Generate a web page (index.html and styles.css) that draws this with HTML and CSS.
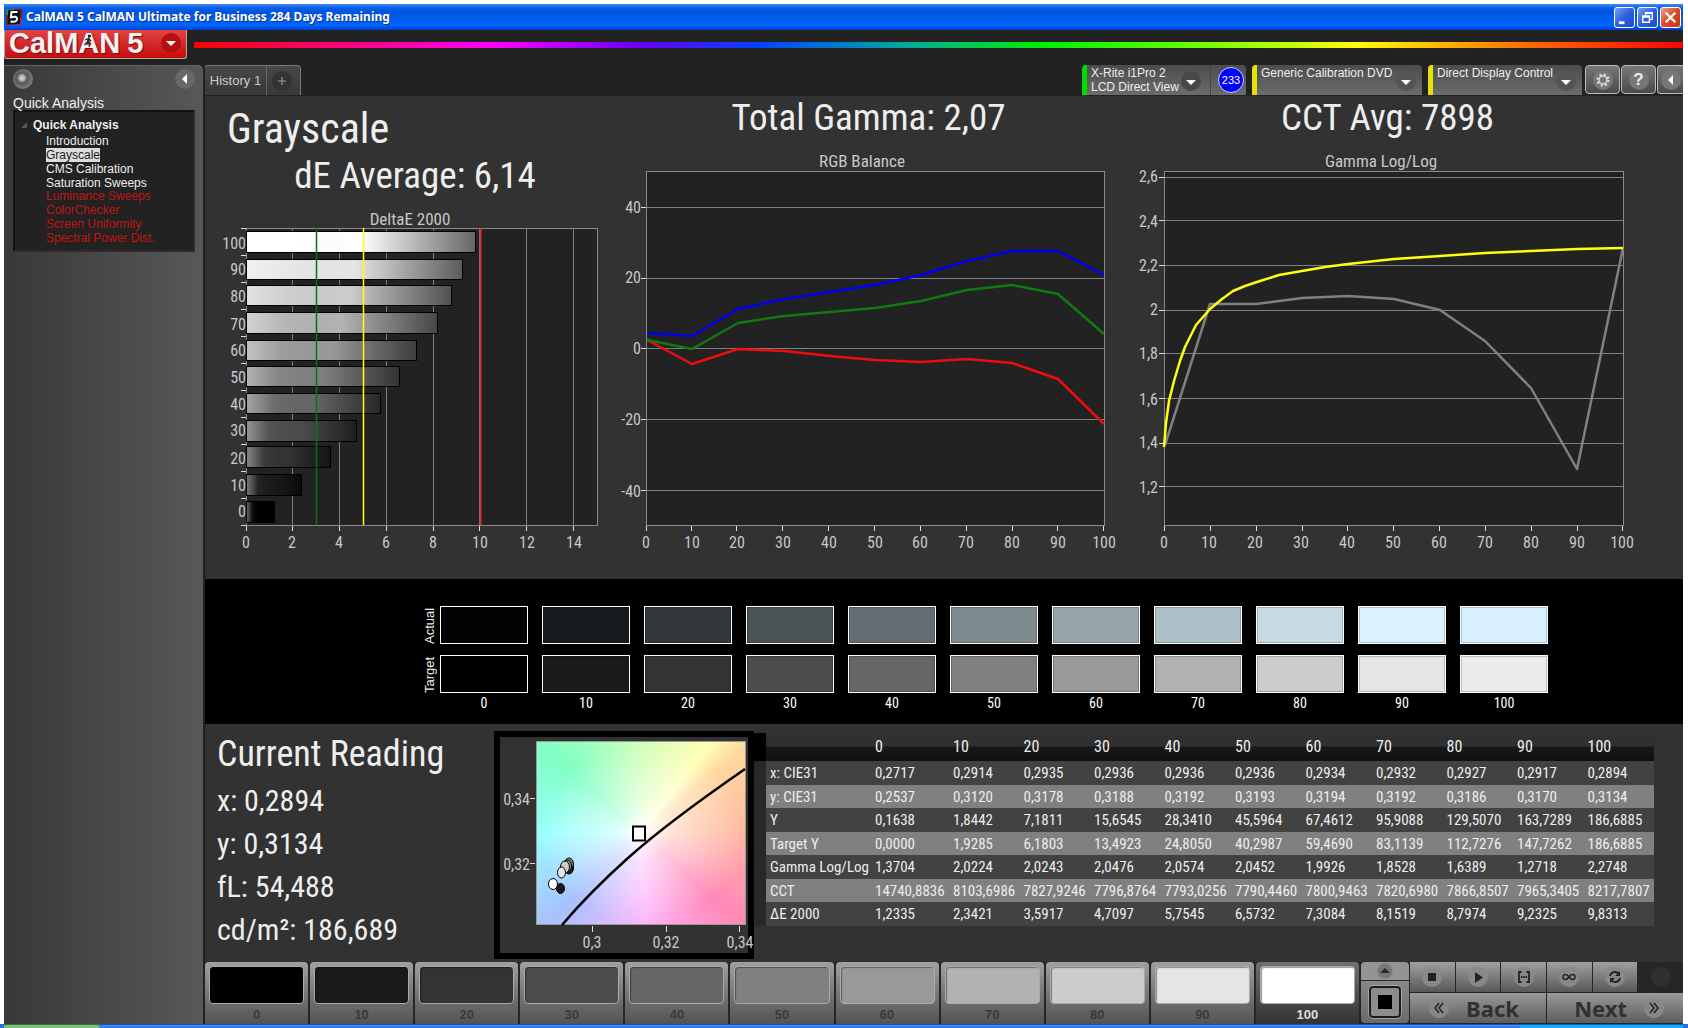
FILE: index.html
```html
<!DOCTYPE html>
<html lang="en">
<head>
<meta charset="utf-8">
<title>CalMAN 5</title>
<link rel="stylesheet" href="styles.css">
</head>
<body>
<div class="window">
  <header class="titlebar">
    <svg class="app-icon" viewBox="0 0 16 16" aria-hidden="true"><rect width="16" height="16" fill="#7a1f10"/><rect width="8" height="6" fill="#2c8a3a"/><rect x="9" y="9" width="7" height="7" fill="#a03060"/><rect x="2" y="1" width="12" height="14" fill="#111"/><path d="M11.500 3H5.500L5 8.200Q11 6.500 11 10T4.500 12.500" fill="none" stroke="#fff" stroke-width="2"/></svg>
    <span class="titlebar-text">CalMAN 5 CalMAN Ultimate for Business 284 Days Remaining</span>
    <div class="window-buttons">
      <button aria-label="Minimize"><svg viewBox="0 0 20 20"><path d="M4 14h6v3H4z" fill="#fff"/></svg></button>
      <button aria-label="Restore"><svg viewBox="0 0 20 20"><path d="M8 8V5h7v7h-3M5 8.500h7V15H5zM8 5.500h7M5 9.500h7" fill="none" stroke="#fff" stroke-width="1.500"/></svg></button>
      <button class="close" aria-label="Close"><svg viewBox="0 0 20 20"><path d="M5 5l10 10M15 5L5 15" stroke="#fff" stroke-width="2.500"/></svg></button>
    </div>
  </header>

  <div class="brandbar">
    <button class="logo">
      <span>CalM<span class="logo-a">A<svg viewBox="0 0 10 14" aria-hidden="true"><circle cx="6.500" cy="2" r="1.600" fill="#222"/><path d="M6 4L4.500 8 7 10 6 13M4.500 8L1.500 11M2 6l3.500-1.500L8 7" fill="none" stroke="#222" stroke-width="1.300"/></svg></span>N<b>5</b></span>
      <span class="logo-arrow"><svg viewBox="0 0 20 20"><path d="M5 8h10l-5 5z" fill="#fff"/></svg></span>
    </button>
    <div class="spectrum"></div>
  </div>

  <div class="body">
    <aside class="sidebar">
      <div class="sidebar-top">
        <button class="round dot" aria-label="Record"></button>
        <button class="round" aria-label="Collapse sidebar"><svg viewBox="0 0 20 20"><path d="M12 5v10L7 10z" fill="#fff"/></svg></button>
      </div>
      <h2 class="sidebar-title">Quick Analysis</h2>
      <nav class="tree">
        <div class="tree-head"><svg viewBox="0 0 6 6"><path d="M6 0v6H0z" fill="#555"/></svg>Quick Analysis</div>
        <ul>
          <li><a href="#">Introduction</a></li>
          <li><a href="#" class="selected">Grayscale</a></li>
          <li><a href="#">CMS Calibration</a></li>
          <li><a href="#">Saturation Sweeps</a></li>
        </ul>
        <ul class="locked">
          <li><a href="#">Luminance Sweeps</a></li>
          <li><a href="#">ColorChecker</a></li>
          <li><a href="#">Screen Uniformity</a></li>
          <li><a href="#">Spectral Power Dist.</a></li>
        </ul>
      </nav>
    </aside>

    <div class="workspace">
      <div class="tabrow">
        <div class="tabs">
          <button class="tab">History 1</button>
          <button class="tab add" aria-label="Add history"><svg viewBox="0 0 20 20"><circle cx="10" cy="10" r="10" fill="#333"/><path d="M10 6v8M6 10h8" stroke="#999" stroke-width="1.200"/></svg></button>
        </div>
        <div class="devices">
          <div class="device meter">
            <button class="device-pick"><span>X-Rite i1Pro 2<br>LCD Direct View</span><svg class="drop" viewBox="0 0 20 20"><circle cx="10" cy="10" r="10" fill="#484848"/><path d="M5 9h10l-5 5z" fill="#fff"/></svg></button>
            <span class="count">233</span>
          </div>
          <div class="device source">
            <button class="device-pick"><span>Generic Calibration DVD</span><svg class="drop" viewBox="0 0 20 20"><circle cx="10" cy="10" r="10" fill="#555"/><path d="M5 9h10l-5 5z" fill="#fff"/></svg></button>
          </div>
          <div class="device display">
            <button class="device-pick"><span>Direct Display Control</span><svg class="drop" viewBox="0 0 20 20"><circle cx="10" cy="10" r="10" fill="#555"/><path d="M5 9h10l-5 5z" fill="#fff"/></svg></button>
          </div>
          <button class="tool" aria-label="Settings"><svg viewBox="0 0 20 20"><circle cx="10" cy="10" r="10" fill="#777"/><circle cx="10" cy="10" r="4" fill="none" stroke="#ddd" stroke-width="1.500"/><circle cx="10" cy="10" r="5.600" fill="none" stroke="#ddd" stroke-width="2" stroke-dasharray="2.200 2.200"/></svg></button>
          <button class="tool help" aria-label="Help"><span>?</span></button>
          <button class="tool cut" aria-label="Collapse"><svg viewBox="0 0 20 20"><circle cx="10" cy="10" r="10" fill="#777"/><path d="M12 5v10L7 10z" fill="#fff"/></svg></button>
        </div>
      </div>

      <main class="page">
        <section class="charts">
          <div class="chart">
            <h1>Grayscale</h1>
            <p class="metric average">dE Average: 6,14</p>
            <svg class="plot" viewBox="205 198 400 381" role="img" aria-label="DeltaE 2000">
              <defs>
                <linearGradient id="shade"><stop offset="0" stop-color="#fff" stop-opacity=".4"/><stop offset=".2" stop-color="#fff" stop-opacity=".05"/><stop offset=".5" stop-color="#000" stop-opacity="0"/><stop offset="1" stop-color="#000" stop-opacity=".6"/></linearGradient>
              </defs>
              <text class="caption" x="410" y="225" text-anchor="middle">DeltaE 2000</text>
              <rect class="area" x="246.500" y="228.500" width="351" height="297"/>
              <path class="grid" d="M292.500 228v297M339.500 228v297M386.500 228v297M433.500 228v297M479.500 228v297M526.500 228v297M573.500 228v297"/>
              <g stroke="#000">
                <rect fill="#fff" x="246.500" y="231.500" width="229" height="21"/>
                <rect fill="#e5e5e5" x="246.500" y="259.500" width="216" height="20"/>
                <rect fill="#ccc" x="246.500" y="285.500" width="205" height="20"/>
                <rect fill="#b2b2b2" x="246.500" y="312.500" width="191" height="21"/>
                <rect fill="#999" x="246.500" y="340.500" width="170" height="20"/>
                <rect fill="#808080" x="246.500" y="366.500" width="153" height="20"/>
                <rect fill="#666" x="246.500" y="393.500" width="134" height="20"/>
                <rect fill="#4c4c4c" x="246.500" y="420.500" width="110" height="21"/>
                <rect fill="#333" x="246.500" y="446.500" width="84" height="21"/>
                <rect fill="#1a1a1a" x="246.500" y="474.500" width="55" height="21"/>
                <rect fill="#000" x="246.500" y="501.500" width="28" height="21"/>
              </g>
              <g fill="url(#shade)">
                <rect x="247" y="232" width="228" height="20"/><rect x="247" y="260" width="215" height="19"/><rect x="247" y="286" width="204" height="19"/><rect x="247" y="313" width="190" height="20"/><rect x="247" y="341" width="169" height="19"/><rect x="247" y="367" width="152" height="19"/><rect x="247" y="394" width="133" height="19"/><rect x="247" y="421" width="109" height="20"/><rect x="247" y="447" width="83" height="20"/><rect x="247" y="475" width="54" height="20"/><rect x="247" y="502" width="27" height="20"/>
              </g>
              <path stroke="#107010" stroke-width="1.500" d="M316.500 228v297"/><path stroke="#ffff10" stroke-width="1.500" d="M363.500 228v297"/><path stroke="#d83030" stroke-width="2" d="M480.500 228v297"/>
              <path class="tick" d="M241 228.500h5M241 255.500h5M241 282.500h5M241 309.500h5M241 336.500h5M241 363.500h5M241 390.500h5M241 417.500h5M241 444.500h5M241 471.500h5M241 498.500h5M241 525.500h5M246.500 526v5M292.500 526v5M339.500 526v5M386.500 526v5M433.500 526v5M479.500 526v5M526.500 526v5M573.500 526v5"/>
              <g text-anchor="end"><text x="246" y="249">100</text><text x="246" y="275">90</text><text x="246" y="302">80</text><text x="246" y="330">70</text><text x="246" y="356">60</text><text x="246" y="383">50</text><text x="246" y="410">40</text><text x="246" y="436">30</text><text x="246" y="464">20</text><text x="246" y="491">10</text><text x="246" y="517">0</text></g>
              <g text-anchor="middle"><text x="246" y="548">0</text><text x="292" y="548">2</text><text x="339" y="548">4</text><text x="386" y="548">6</text><text x="433" y="548">8</text><text x="480" y="548">10</text><text x="527" y="548">12</text><text x="574" y="548">14</text></g>
            </svg>
          </div>

          <div class="chart">
            <p class="metric gamma">Total Gamma: 2,07</p>
            <svg class="plot" viewBox="605 140 515 439" role="img" aria-label="RGB Balance">
              <text class="caption" x="862" y="167" text-anchor="middle">RGB Balance</text>
              <rect class="area" x="646.500" y="171.500" width="458" height="354"/>
              <path class="grid" d="M647 207.500h457M647 278.500h457M647 348.500h457M647 419.500h457M647 490.500h457"/>
              <g class="curve">
                <polyline stroke="#f00c0c" points="647,340 692,364 738,349 784,351 830,356 875,360 921,362 967,359 1012,363 1058,379 1104,424"/>
                <polyline stroke="#107a10" points="647,340 692,349 738,323 784,316 830,312 875,308 921,301 967,290 1012,285 1058,294 1104,334"/>
                <polyline stroke="#0000f0" points="647,333 692,336 738,309 784,299 830,292 875,285 921,275 967,261 1012,251 1058,251 1104,275"/>
              </g>
              <path class="tick" d="M641 207.500h5M641 278.500h5M641 348.500h5M641 419.500h5M641 490.500h5M646.500 526v5M691.500 526v5M736.500 526v5M782.500 526v5M828.500 526v5M874.500 526v5M920.500 526v5M966.500 526v5M1012.500 526v5M1057.500 526v5M1103.500 526v5"/>
              <g text-anchor="end"><text x="641" y="213">40</text><text x="641" y="283">20</text><text x="641" y="354">0</text><text x="641" y="425">-20</text><text x="641" y="497">-40</text></g>
              <g text-anchor="middle"><text x="646" y="548">0</text><text x="692" y="548">10</text><text x="737" y="548">20</text><text x="783" y="548">30</text><text x="829" y="548">40</text><text x="875" y="548">50</text><text x="920" y="548">60</text><text x="966" y="548">70</text><text x="1012" y="548">80</text><text x="1058" y="548">90</text><text x="1104" y="548">100</text></g>
            </svg>
          </div>

          <div class="chart">
            <p class="metric cct">CCT Avg: 7898</p>
            <svg class="plot" viewBox="1120 140 563 439" role="img" aria-label="Gamma Log/Log">
              <text class="caption" x="1381" y="167" text-anchor="middle">Gamma Log/Log</text>
              <rect class="area" x="1164.500" y="171.500" width="459" height="354"/>
              <path class="grid" d="M1165 177.500h458M1165 220.500h458M1165 265.500h458M1165 310.500h458M1165 353.500h458M1165 398.500h458M1165 443.500h458M1165 486.500h458"/>
              <g class="curve">
                <polyline stroke="#808080" points="1165,445 1210,304 1256,304 1302,298 1348,296 1394,299 1440,310 1485,341 1531,388 1577,469 1623,248"/>
                <polyline stroke="#ffff10" points="1164,447 1166,423 1169,401 1174,381 1180,361 1185,347 1196,325 1210,309 1222,299 1233,291 1245,286 1260,281 1279,275 1302,271 1325,267 1348,264 1394,259 1440,256 1485,253 1531,251 1577,249 1623,248"/>
              </g>
              <path class="tick" d="M1159 177.500h5M1159 220.500h5M1159 265.500h5M1159 310.500h5M1159 353.500h5M1159 398.500h5M1159 443.500h5M1159 486.500h5M1164.500 526v5M1210.500 526v5M1256.500 526v5M1302.500 526v5M1347.500 526v5M1393.500 526v5M1439.500 526v5M1485.500 526v5M1531.500 526v5M1577.500 526v5M1622.500 526v5"/>
              <g text-anchor="end"><text x="1158" y="182">2,6</text><text x="1158" y="227">2,4</text><text x="1158" y="271">2,2</text><text x="1158" y="315">2</text><text x="1158" y="359">1,8</text><text x="1158" y="405">1,6</text><text x="1158" y="448">1,4</text><text x="1158" y="493">1,2</text></g>
              <g text-anchor="middle"><text x="1164" y="548">0</text><text x="1209" y="548">10</text><text x="1255" y="548">20</text><text x="1301" y="548">30</text><text x="1347" y="548">40</text><text x="1393" y="548">50</text><text x="1439" y="548">60</text><text x="1485" y="548">70</text><text x="1531" y="548">80</text><text x="1577" y="548">90</text><text x="1622" y="548">100</text></g>
            </svg>
          </div>
        </section>

        <section class="swatches">
          <div class="swatch-names"><span>Actual</span><span>Target</span></div>
          <div class="swatch-grid">
            <i style="background:#030305"></i><i style="background:#171b1d"></i><i style="background:#323739"></i><i style="background:#4b5356"></i><i style="background:#656c72"></i><i style="background:#7d8a8e"></i><i style="background:#96a3aa"></i><i style="background:#aec0c7"></i><i style="background:#c7dae3"></i><i style="background:#dcf2ff"></i><i style="background:#d8efff"></i>
            <i style="background:#000"></i><i style="background:#1a1a1a"></i><i style="background:#333"></i><i style="background:#4c4c4c"></i><i style="background:#666"></i><i style="background:#808080"></i><i style="background:#999"></i><i style="background:#b2b2b2"></i><i style="background:#ccc"></i><i style="background:#e5e5e5"></i><i style="background:#ebebeb"></i>
            <span>0</span><span>10</span><span>20</span><span>30</span><span>40</span><span>50</span><span>60</span><span>70</span><span>80</span><span>90</span><span>100</span>
          </div>
        </section>

        <section class="readout">
          <div class="reading">
            <h2>Current Reading</h2>
            <p>x: 0,2894</p>
            <p>y: 0,3134</p>
            <p>fL: 54,488</p>
            <p>cd/m²: 186,689</p>
          </div>
          <div class="cie">
            <div class="cie-field"></div>
            <svg viewBox="495 731 260 228" role="img" aria-label="CIE chart">
              <path d="M563 925Q590 893 629 858T746 769" fill="none" stroke="#000" stroke-width="2.500"/>
              <rect x="634" y="826.500" width="12" height="14" fill="#fff" stroke="#000" stroke-width="2"/>
              <g stroke="#000"><ellipse cx="570" cy="868" rx="4.500" ry="6" fill="#222"/><ellipse cx="570" cy="864" rx="4.500" ry="6" fill="#777"/><ellipse cx="568" cy="866" rx="4.500" ry="6" fill="#999"/><ellipse cx="566" cy="867" rx="4.500" ry="6" fill="#ccc"/><ellipse cx="562.500" cy="872.500" rx="4" ry="5.500" fill="#e5e5e5"/><ellipse cx="561.500" cy="888.500" rx="4" ry="5" fill="#1a1a1a"/><ellipse cx="554" cy="884" rx="4.500" ry="5.500" fill="#fff"/></g>
              <path class="tick" d="M531 798.500h5M531 863.500h5M593.500 926v6M667.500 926v6M740.500 926v6"/>
              <g text-anchor="end"><text x="531" y="805">0,34</text><text x="531" y="870">0,32</text></g>
              <g text-anchor="middle"><text x="593" y="948">0,3</text><text x="667" y="948">0,32</text><text x="741" y="948">0,34</text></g>
            </svg>
          </div>
          <table>
            <colgroup><col class="c-mark"><col class="c-name"><col class="c-first"><col span="10"></colgroup>
            <thead><tr><th></th><th></th><th>0</th><th>10</th><th>20</th><th>30</th><th>40</th><th>50</th><th>60</th><th>70</th><th>80</th><th>90</th><th>100</th></tr></thead>
            <tbody>
            <tr><td></td><th>x: CIE31</th><td>0,2717</td><td>0,2914</td><td>0,2935</td><td>0,2936</td><td>0,2936</td><td>0,2936</td><td>0,2934</td><td>0,2932</td><td>0,2927</td><td>0,2917</td><td>0,2894</td></tr>
            <tr><td></td><th>y: CIE31</th><td>0,2537</td><td>0,3120</td><td>0,3178</td><td>0,3188</td><td>0,3192</td><td>0,3193</td><td>0,3194</td><td>0,3192</td><td>0,3186</td><td>0,3170</td><td>0,3134</td></tr>
            <tr><td></td><th>Y</th><td>0,1638</td><td>1,8442</td><td>7,1811</td><td>15,6545</td><td>28,3410</td><td>45,5964</td><td>67,4612</td><td>95,9088</td><td>129,5070</td><td>163,7289</td><td>186,6885</td></tr>
            <tr><td></td><th>Target Y</th><td>0,0000</td><td>1,9285</td><td>6,1803</td><td>13,4923</td><td>24,8050</td><td>40,2987</td><td>59,4690</td><td>83,1139</td><td>112,7276</td><td>147,7262</td><td>186,6885</td></tr>
            <tr><td></td><th>Gamma Log/Log</th><td>1,3704</td><td>2,0224</td><td>2,0243</td><td>2,0476</td><td>2,0574</td><td>2,0452</td><td>1,9926</td><td>1,8528</td><td>1,6389</td><td>1,2718</td><td>2,2748</td></tr>
            <tr><td></td><th>CCT</th><td>14740,8836</td><td>8103,6986</td><td>7827,9246</td><td>7796,8764</td><td>7793,0256</td><td>7790,4460</td><td>7800,9463</td><td>7820,6980</td><td>7866,8507</td><td>7965,3405</td><td>8217,7807</td></tr>
            <tr><td></td><th>ΔE 2000</th><td>1,2335</td><td>2,3421</td><td>3,5917</td><td>4,7097</td><td>5,7545</td><td>6,5732</td><td>7,3084</td><td>8,1519</td><td>8,7974</td><td>9,2325</td><td>9,8313</td></tr>
            </tbody>
          </table>
        </section>

        <footer class="controls">
          <div class="levels">
            <button><i style="background:#000"></i>0</button>
            <button><i style="background:#1a1a1a"></i>10</button>
            <button><i style="background:#333"></i>20</button>
            <button><i style="background:#4c4c4c"></i>30</button>
            <button><i style="background:#666"></i>40</button>
            <button><i style="background:#808080"></i>50</button>
            <button><i style="background:#999"></i>60</button>
            <button><i style="background:#b2b2b2"></i>70</button>
            <button><i style="background:#ccc"></i>80</button>
            <button><i style="background:#e5e5e5"></i>90</button>
            <button class="active"><i style="background:#fff"></i>100</button>
          </div>
          <div class="window-size">
            <button class="up" aria-label="Expand"><svg viewBox="0 0 16 16"><circle cx="8" cy="8" r="7.500" fill="#777"/><path d="M3 10h10L8 5z" fill="#2a2a2a"/></svg></button>
            <button class="pattern" aria-label="Pattern window"><svg viewBox="0 0 34 34"><rect x="2" y="2" width="30" height="30" rx="3" fill="none" stroke="#ccc" stroke-width="3"/><rect x="2" y="2" width="30" height="30" rx="3" fill="#8c8c8c" stroke="#1c1c1c" stroke-width="2"/><rect x="10" y="10" width="14" height="14" fill="#000"/></svg></button>
          </div>
          <div class="transport">
            <button aria-label="Stop"><svg viewBox="0 0 20 20"><circle cx="10" cy="10" r="10"/><path d="M6 6h8v8H6z" fill="#222"/></svg></button>
            <button aria-label="Play"><svg viewBox="0 0 20 20"><circle cx="10" cy="10" r="10"/><path d="M7 5l8 5.500L7 16z" fill="#222"/></svg></button>
            <button aria-label="Read series"><svg viewBox="0 0 20 20"><circle cx="10" cy="10" r="10"/><path d="M7.500 5H5v10h2.500M12.500 5H15v10h-2.500M7 10h1.500M9.300 10h1.500M11.600 10h1.500" fill="none" stroke="#222" stroke-width="1.800"/></svg></button>
            <button aria-label="Read continuously"><svg viewBox="0 0 20 20"><circle cx="10" cy="10" r="10"/><path d="M10 10C8 7 4 6.500 4 10S8 13 10 10 16 6.500 16 10 12 13 10 10z" fill="none" stroke="#222" stroke-width="1.500"/></svg></button>
            <button aria-label="Refresh"><svg viewBox="0 0 20 20"><circle cx="10" cy="10" r="10"/><path d="M5 9q1-4 5-4 2.500 0 4 2M15 11q-1 4-5 4-2.500 0-4-2" fill="none" stroke="#222" stroke-width="2"/><path d="M15 4v5h-5zM5 16v-5h5z" fill="#222"/></svg></button>
            <button class="off" aria-label="Idle"><svg viewBox="0 0 20 20"><circle cx="10" cy="10" r="10"/></svg></button>
            <button class="wide back"><svg viewBox="0 0 20 20"><circle cx="10" cy="10" r="10"/><path d="M10 5l-4 5 4 5M14 5l-4 5 4 5" fill="none" stroke="#222" stroke-width="1.500"/></svg>Back</button>
            <button class="wide next">Next<svg viewBox="0 0 20 20"><circle cx="10" cy="10" r="10"/><path d="M6 5l4 5-4 5M10 5l4 5-4 5" fill="none" stroke="#222" stroke-width="1.500"/></svg></button>
          </div>
        </footer>
      </main>
    </div>
  </div>
</div>
<div class="taskbar"><div class="start"></div><div class="tasks"></div><div class="tray"></div></div>
</body>
</html>
```
FILE: styles.css
```css
* { box-sizing: border-box; }
body {
  margin: 0;
  min-height: 100vh;
  display: flex;
  flex-direction: column;
  background: #fff;
  color: #eee;
  font: 12px/14px "Liberation Sans", Arial, sans-serif;
}
button { margin: 0; padding: 0; border: 0; background: none; color: inherit; font: inherit; }
h1, h2, p, ul { margin: 0; padding: 0; font-weight: normal; list-style: none; }
a { color: inherit; text-decoration: none; }
svg { display: block; }

.window {
  flex: 1;
  display: flex;
  flex-direction: column;
  margin: 4px 5px 0 4px;
  background: #222;
}

/* Title bar */
.titlebar {
  display: flex;
  align-items: center;
  height: 26px;
  padding: 0 2px;
  background: linear-gradient(#3f8cf3, #0a5de8 4px, #0054e0 8px, #0066ff 21px, #003fd0);
}
.app-icon { width: 16px; height: 16px; }
.titlebar-text {
  flex: 1;
  padding-left: 4px;
  color: #fff;
  font: bold 12px/20px "Noto Sans", "Open Sans", sans-serif;
  text-shadow: 1px 1px #10307c;
}
.window-buttons { display: flex; gap: 2px; }
.window-buttons button {
  width: 21px;
  height: 21px;
  border: 1px solid #fff;
  border-radius: 3px;
  background: linear-gradient(135deg, #7ba1f5, #2a5fe0 50%, #1d4fd0);
}
.window-buttons .close { background: linear-gradient(135deg, #f0a088, #dc4a24 50%, #c03a14); }

/* Logo and spectrum */
.brandbar { display: flex; height: 35px; gap: 7px; }
.logo {
  display: flex;
  justify-content: space-between;
  width: 183px;
  height: 29px;
  padding: 0 5px 0 4px;
  border: solid #aaa;
  border-width: 0 1px 1px;
  border-radius: 0 0 3px 3px;
  background: linear-gradient(#e04444, #c80c0c);
  color: #f2f2f2;
  font: bold 29px/26px "Liberation Sans", Arial, sans-serif;
  text-shadow: 1px 1px 1px #701010;
}
.logo b { padding-left: 7px; }
.logo-a { position: relative; }
.logo-a svg { position: absolute; left: 5px; top: 7px; width: 10px; height: 14px; }
.logo-arrow { width: 20px; height: 20px; margin: 3px 0; border-radius: 50%; background: #b81010; }
.spectrum {
  flex: 1;
  height: 6px;
  margin-top: 12px;
  background: linear-gradient(90deg, #f00, #f0a 14%, #f0f 20%, #60f 30%, #04f 38%, #0a9 48%, #0e0 57%, #6f0 67%, #ff0 78%, #f60 90%, #f00);
}

.body { flex: 1; display: flex; gap: 2px; }

/* Sidebar */
.sidebar {
  width: 199px;
  padding: 3px 8px 0 9px;
  border-top: 1px solid #666;
  border-radius: 0 5px 0 0;
  background: linear-gradient(90deg, #383838, #585858);
}
.sidebar-top { display: flex; justify-content: space-between; }
.round { width: 20px; height: 20px; border-radius: 50%; background: #686868; }
.dot { background: radial-gradient(circle at 9px 9px, #ddd, #aaa 3px, #555 5px, #777 10px); }
.sidebar-title { padding-top: 5px; font-size: 14px; line-height: 18px; }
.tree {
  height: 142px;
  margin-top: -2px;
  padding: 6px 6px;
  border: 2px solid #151515;
  border-color: #111 #2c2c2c #2c2c2c #111;
  background: #222;
  line-height: 14px;
}
.tree-head { display: flex; align-items: center; gap: 6px; padding-bottom: 2px; font-weight: bold; }
.tree-head svg { width: 6px; height: 6px; }
.tree li { padding-left: 25px; }
.selected { display: inline-block; background: #ddd; color: #222; }
.locked { margin-top: -1px; color: #c01414; }

/* Tab row */
.workspace { flex: 1; min-width: 0; display: flex; flex-direction: column; }
.tabrow { display: flex; justify-content: space-between; height: 31px; overflow: hidden; }
.tabs { display: flex; height: 30px; margin-left: -1px; border: 1px solid #777; border-bottom: 0; border-radius: 4px 4px 0 0; background: linear-gradient(#484848, #383838); }
.tab { width: 61px; color: #ccc; font-size: 13px; }
.tab.add { width: 34px; padding-left: 5px; border-left: 1px solid #666; }
.add svg { width: 20px; height: 20px; }
.devices { display: flex; align-items: flex-start; }
.device {
  display: flex;
  height: 30px;
  margin-right: 6px;
  border-left: 5px solid #0d0;
  border-radius: 4px 4px 0 0;
  background: linear-gradient(#4c4c4c, #6c6c6c);
}
.meter { width: 164px; }
.source { width: 170px; border-color: #e4e400; }
.display { width: 154px; margin-right: 3px; border-color: #e4e400; }
.device-pick { flex: 1; display: flex; justify-content: space-between; padding: 1px 6px 0 4px; text-align: left; white-space: nowrap; }
.drop { width: 20px; height: 20px; margin-top: 5px; }
.source .drop, .display .drop { margin-left: -6px; }
.meter .device-pick { padding-right: 9px; border-right: 1px solid #444; }
.count {
  width: 26px;
  height: 26px;
  margin: 2px 2px 0 7px;
  border: 1px solid #ccf;
  border-radius: 50%;
  background: #00f;
  color: #fff;
  font-size: 11px;
  line-height: 24px;
  text-align: center;
}
.tool {
  display: flex;
  align-items: center;
  justify-content: center;
  width: 35px;
  height: 29px;
  margin-right: 1px;
  border: 1px solid #bbb;
  border-radius: 4px;
  background: linear-gradient(#777, #4a4a4a);
}
.tool svg { width: 20px; height: 20px; }
.help span { width: 20px; height: 20px; border-radius: 50%; background: #777; color: #eee; font-size: 17px; font-weight: bold; line-height: 20px; }
.cut { width: 26px; margin-right: 0; border-right: 0; border-radius: 4px 0 0 4px; }

/* Page */
.page { flex: 1; display: flex; flex-direction: column; background: #323232; font-family: "Roboto Condensed", "Liberation Sans", sans-serif; }
.charts { display: grid; grid-template-columns: 400fr 515fr 563fr; }
.chart { display: flex; flex-direction: column; justify-content: flex-end; }
h1 { padding: 8px 0 0 22px; font-size: 42px; line-height: 50px; }
.metric { font-size: 37px; line-height: 44px; text-align: center; }
.average { padding-left: 20px; }
.gamma { padding-left: 12px; }
.cct { padding-right: 28px; }
.plot { width: 100%; }
svg text { fill: #c8c8c8; font-size: 16px; }
svg .caption { font-size: 17px; }
.area { fill: #222; stroke: #8a8a8a; }
.grid { fill: none; stroke: #808080; }
.tick { fill: none; stroke: #ddd; }
.curve { fill: none; stroke-width: 2.500; stroke-linejoin: round; }

/* Actual / target swatches */
.swatches { display: flex; height: 145px; padding: 27px 135px 0 219px; background: #000; }
.swatch-names { display: flex; flex-direction: column; gap: 11px; width: 16px; }
.swatch-names span { width: 12px; height: 38px; font: 13px/12px "Liberation Sans", sans-serif; writing-mode: vertical-rl; transform: rotate(180deg); }
.swatch-grid { flex: 1; display: grid; grid-template: 38px 38px 20px / repeat(11, 1fr); column-gap: 14px; row-gap: 11px; }
.swatch-grid i { border: 1px solid #fff; box-shadow: inset 0 0 0 1px #0003; }
.swatch-grid span { margin-top: -11px; color: #fff; font-size: 14px; line-height: 20px; text-align: center; }

/* Current reading, chromaticity and table */
.readout { display: flex; align-items: flex-start; flex: 1; min-height: 238px; padding-right: 29px; }
.reading { width: 289px; padding: 8px 0 0 12px; }
.reading h2 { margin-bottom: 3px; font-size: 36px; line-height: 44px; }
.reading p { font-size: 30px; line-height: 43px; }
.cie { position: relative; width: 260px; height: 228px; margin-top: 7px; border: 6px solid #000; background: #323232; }
.cie-field {
  position: absolute;
  left: 36px;
  top: 4px;
  width: 210px;
  height: 184px;
  border: 1px solid #999;
  background:
    radial-gradient(ellipse at 50% 50%, #fff 0, #fff9 20%, #fff0 70%),
    conic-gradient(from 0deg at 50% 50%, #d0ffb8, #ffffb8 38deg, #ffd8a0 50deg, #ffb8a0 90deg, #ff88b8 132deg, #ffb8ff 178deg, #a8c0ff 226deg, #98ffff 270deg, #80ffc4 312deg, #d0ffb8);
}
.cie svg { position: absolute; left: -6px; top: -6px; width: 260px; height: 228px; }
table { flex: 1; margin-top: 9px; table-layout: fixed; border-collapse: collapse; font-size: 15px; line-height: 20px; }
.c-mark { width: 12px; }
.c-name { width: 105px; }
.c-first { width: 78px; }
th, td { padding: 0 0 0 4px; font-weight: normal; text-align: left; white-space: nowrap; }
thead tr { height: 28px; background: linear-gradient(#303030 13px, #181818 14px, #101010); }
thead th { font-size: 16px; }
thead th:first-child { background: #000; }
tbody tr { height: 24px; background: #424242; }
tbody tr:nth-child(even) { height: 23px; background: #808080; }
tbody td:first-child { background: #282828; }

/* Bottom controls */
.controls { display: flex; height: 62px; padding-bottom: 1px; background: #262626; color: #3a3a3a; }
.levels { flex: 1; display: grid; grid-template-columns: repeat(11, 1fr); gap: 2px; padding-right: 2px; }
.levels button {
  display: flex;
  flex-direction: column;
  padding: 4px 4px 0;
  border-radius: 4px;
  background: linear-gradient(#a0a0a0, #808080 25px, #505050);
  font: bold 13px/22px "Liberation Sans", sans-serif;
  text-align: center;
  align-items: stretch;
}
.levels i { height: 38px; border: 1px solid #aaa; border-radius: 4px; box-shadow: inset 1px 1px 1px #0006; }
.levels .active { background: linear-gradient(#707070, #303030); color: #ddd; }
.window-size { display: flex; flex-direction: column; gap: 1px; width: 48px; margin-right: 1px; }
.window-size button { display: flex; align-items: center; justify-content: center; background: linear-gradient(#888, #6a6a6a); }
.window-size .up { height: 18px; border-radius: 4px 4px 0 0; background: #949494; }
.up svg { width: 16px; height: 16px; }
.window-size .pattern { flex: 1; border-radius: 0 0 4px 4px; }
.pattern svg { width: 34px; height: 34px; }
.transport { display: grid; grid-template: 30px 30px / repeat(6, 1fr); gap: 1px; width: 273px; }
.transport button { display: flex; align-items: center; justify-content: center; background: linear-gradient(#a0a0a0, #585858); color: #303030; }
.transport svg { width: 20px; height: 20px; fill: #888; }
.transport .off { background: #262626; }
.off svg { fill: #303030; }
.transport .wide { grid-column: span 3; gap: 17px; background: linear-gradient(#9a9a9a, #5c5c5c); font: bold 22px/30px "Noto Sans", "Open Sans", sans-serif; }
.transport .back { padding-right: 8px; }
.transport .next { justify-content: flex-end; padding-right: 19px; }

/* Desktop taskbar */
.taskbar { display: flex; height: 4px; background: #2a6fe0; }
.start { width: 96px; margin-left: 4px; border-top: 1px solid #2c7a2c; border-radius: 0 4px 0 0; background: #7cc07c; }
.tasks { flex: 1; border-top: 1px solid #1c50b0; background: linear-gradient(#4c94f8, #2a70e4); }
.tray { width: 163px; margin-right: 5px; border-top: 1px solid #0c60b0; background: #18a8f4; }
```
